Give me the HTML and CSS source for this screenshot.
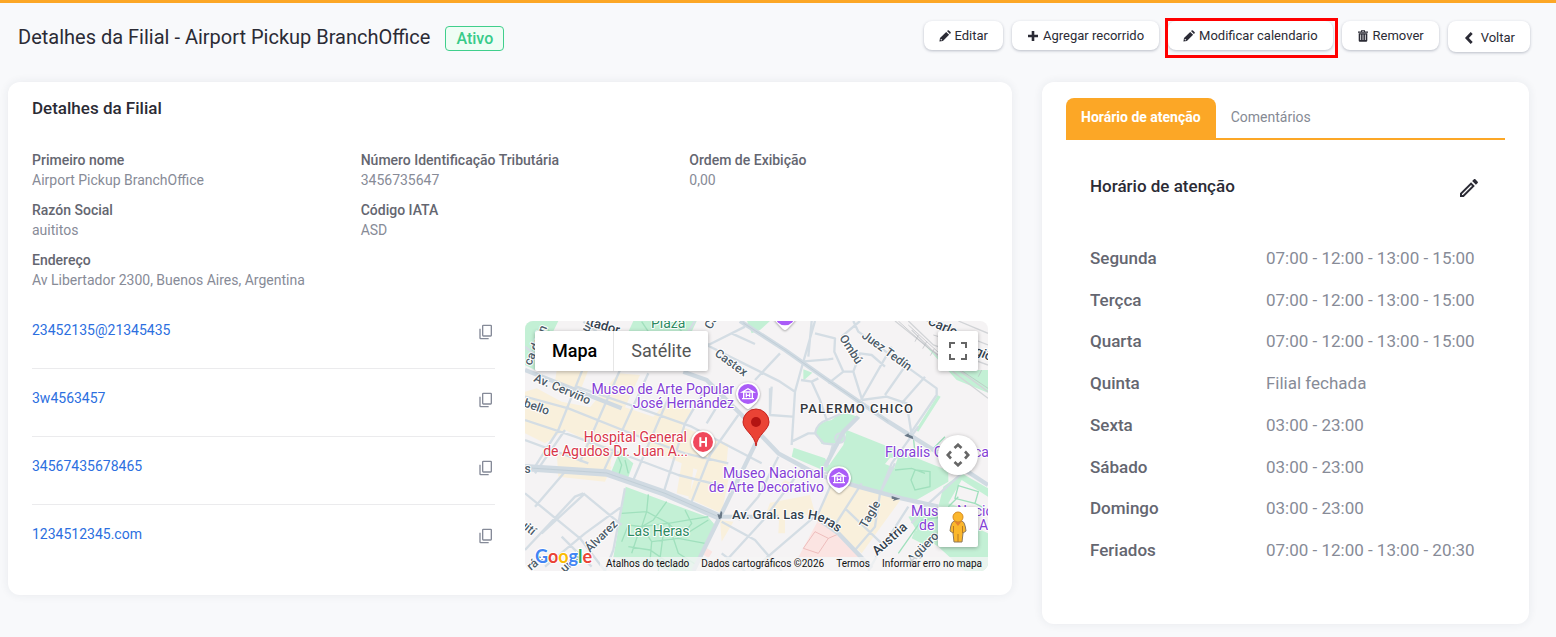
FILE: index.html
```html
<!DOCTYPE html>
<html lang="pt">
<head>
<meta charset="utf-8">
<meta name="viewport" content="width=device-width, initial-scale=1">
<title>Detalhes da Filial</title>
<link rel="stylesheet" href="styles.css">
</head>
<body>
<header class="page-header">
  <h1 class="page-title">Detalhes da Filial - Airport Pickup BranchOffice</h1>
  <span class="badge">Ativo</span>
  <div class="actions">
    <button class="btn" type="button"><svg class="btn-icon" viewBox="0 0 12 12"><path fill="currentColor" fill-rule="evenodd" d="M.4 11.6 1 8.100 7.200 1.900 10.100 4.800 3.900 11ZM8 1.100 8.700.4Q9.300-.1 9.900.5L11.500 2.100Q12.100 2.700 11.600 3.300L10.900 4ZM1.900 8.700 1.500 9.500 2.500 10.500 3.400 10.100Z"/></svg>Editar</button>
    <button class="btn" type="button"><svg class="btn-icon" viewBox="0 0 12 12"><path fill="currentColor" d="M4.700 1h2.600v3.700H11v2.600H7.300V11H4.700V7.300H1V4.700h3.700z"/></svg>Agregar recorrido</button>
    <button class="btn btn-marked" type="button"><svg class="btn-icon" viewBox="0 0 12 12"><path fill="currentColor" fill-rule="evenodd" d="M.4 11.600 1 8.100 7.200 1.900 10.100 4.800 3.900 11ZM8 1.100 8.700.4Q9.300-.1 9.900.5L11.500 2.100Q12.100 2.700 11.600 3.300L10.900 4ZM1.900 8.700 1.500 9.500 2.500 10.500 3.400 10.100Z"/></svg>Modificar calendario</button>
    <button class="btn" type="button"><svg class="btn-icon" viewBox="0 0 12 12"><path fill="currentColor" fill-rule="evenodd" d="M4 1.500V.2h4v1.300h3v1.300H1V1.500ZM5 1.100v.4h2v-.4ZM1.700 3.300h8.600V10.500q0 1.300-1.200 1.300H2.900q-1.200 0-1.200-1.300ZM3.300 4.400v5.700h.8V4.400ZM5.600 4.400v5.700h.8V4.400ZM7.900 4.400v5.700h.8V4.400Z"/></svg>Remover</button>
    <a class="btn btn-back" href="#"><svg class="btn-icon" viewBox="0 0 12 12"><path fill="none" stroke="currentColor" stroke-width="2.800" d="M8.700 1 3.900 6l4.800 5"/></svg>Voltar</a>
  </div>
</header>

<main class="content">
  <section class="card details">
    <h2 class="card-title">Detalhes da Filial</h2>
    <dl class="fields">
      <div class="field"><dt>Primeiro nome</dt><dd>Airport Pickup BranchOffice</dd></div>
      <div class="field"><dt>Número Identificação Tributária</dt><dd>3456735647</dd></div>
      <div class="field"><dt>Ordem de Exibição</dt><dd>0,00</dd></div>
      <div class="field"><dt>Razón Social</dt><dd>auititos</dd></div>
      <div class="field"><dt>Código IATA</dt><dd>ASD</dd></div>
      <div class="field field-wide"><dt>Endereço</dt><dd>Av Libertador 2300, Buenos Aires, Argentina</dd></div>
    </dl>
    <div class="contact-row">
      <ul class="contacts">
        <li><a href="#">23452135@21345435</a><button class="copy" type="button" aria-label="Copiar"><svg viewBox="0 0 24 24"><path fill="currentColor" d="M16 21H4V7H2v14a2 2 0 0 0 2 2h12zM19 1H8a2 2 0 0 0-2 2v14a2 2 0 0 0 2 2h11a2 2 0 0 0 2-2V3a2 2 0 0 0-2-2m0 16H8V3h11z"/></svg></button></li>
        <li><a href="#">3w4563457</a><button class="copy" type="button" aria-label="Copiar"><svg viewBox="0 0 24 24"><path fill="currentColor" d="M16 21H4V7H2v14a2 2 0 0 0 2 2h12zM19 1H8a2 2 0 0 0-2 2v14a2 2 0 0 0 2 2h11a2 2 0 0 0 2-2V3a2 2 0 0 0-2-2m0 16H8V3h11z"/></svg></button></li>
        <li><a href="#">34567435678465</a><button class="copy" type="button" aria-label="Copiar"><svg viewBox="0 0 24 24"><path fill="currentColor" d="M16 21H4V7H2v14a2 2 0 0 0 2 2h12zM19 1H8a2 2 0 0 0-2 2v14a2 2 0 0 0 2 2h11a2 2 0 0 0 2-2V3a2 2 0 0 0-2-2m0 16H8V3h11z"/></svg></button></li>
        <li><a href="#">1234512345.com</a><button class="copy" type="button" aria-label="Copiar"><svg viewBox="0 0 24 24"><path fill="currentColor" d="M16 21H4V7H2v14a2 2 0 0 0 2 2h12zM19 1H8a2 2 0 0 0-2 2v14a2 2 0 0 0 2 2h11a2 2 0 0 0 2-2V3a2 2 0 0 0-2-2m0 16H8V3h11z"/></svg></button></li>
      </ul>
      <div class="map">
        <svg class="map-art" viewBox="0 0 463 250" preserveAspectRatio="xMidYMid slice" role="img" aria-label="Mapa de Palermo Chico">
          <defs>
            <path id="las-heras-avenue" d="M207 198H280C292 198 298 202 305 206L325 220"/>
          </defs>
          <svg viewBox="0 3 1389 750" width="463" height="250">
            <rect y="3" width="1389" height="750" fill="#f5f3f4"/>
            <g class="blocks">
              <path d="M95 150H190L158 232 88 200ZM0 215 35 205 110 245 195 262 280 160 345 165 300 262 385 290 420 250 500 270 470 320 610 372 600 480 505 445 495 530 455 520 470 430 380 390 340 345 260 330 215 375 120 330 60 370 0 340ZM95 395 260 440 240 485 100 470ZM185 360 265 385 255 440 170 420ZM520 440 610 480 590 580 490 535ZM725 575 735 548 855 525 870 580 780 600 780 640 760 640 762 602ZM912 500 980 490 1130 535 1010 700 880 590ZM585 600 625 605 590 665ZM780 480 810 495 795 520 755 505Z"/>
            </g>
            <path fill="#fbe4e2" d="M880 600 945 640 1010 712 820 712ZM540 680 562 695 550 715 530 700ZM575 712 610 725 600 753 560 745Z"/>
            <g class="parks">
              <path d="M0 3H100L72 60 30 150 0 135ZM325 3H515L500 35 310 35ZM666 3H735L705 30 680 40ZM835 148 862 158 835 182ZM302 500 550 592 570 615 510 753 440 753 265 712ZM283 395 325 430 305 485 255 465ZM806 383 900 415 912 436 955 375 965 330 1270 452 1270 485 1165 545 985 490 800 410ZM870 335Q880 305 920 300L950 275 1005 292 968 330 945 370 890 372ZM1190 65 1300 150 1389 150 1389 218 1295 180ZM1238 226 1247 230 1180 335 1172 330ZM1150 590 1240 570 1389 640V753H1320L1240 680 1180 640ZM1255 500 1310 460 1389 505V560H1240ZM1170 630 1240 660 1210 680 1160 655Z"/>
            </g>
            <path fill="#f5f3f4" d="M1080 432 1095 413 1118 415 1108 443ZM1310 480 1389 530 1389 590 1270 550Z"/>
            <g fill="none" stroke="#a0e0bd" stroke-width="4">
              <path d="M370 523 365 575 350 620 310 615 290 665M425 545 385 600 350 620 380 665 375 725M290 580 365 575 430 610 550 590M430 610 470 650 550 600M350 620 430 610 460 700 515 735M380 665 460 655 540 670M345 625 320 700M415 640 400 753M470 650 500 610 480 570M310 680 375 690 455 745M1165 350 1170 400 1215 395 1260 350M1110 450 1160 445 1200 460M1170 450 1215 455V500L1170 510 1158 480ZM1300 497 1360 515 1350 550 1290 535ZM1270 560 1300 530M1350 550 1389 570M1120 700 1190 600 1260 590M275 400 290 435 280 470M300 420 310 460M40 60 10 110M60 20 90 50M350 5 370 35M440 3 470 34"/>
            </g>
            <g class="minor">
              <path d="M0 80 90 150M175 5 215 35M180 130 100 330 30 440M285 150 165 425M370 160 235 455M430 235 325 480M510 3 490 35M545 200 480 310 415 520M640 285 555 405 500 545M550 75 660 20M545 75 765 185 810 215M620 40 690 72M690 180 765 100M740 200 735 285 802 290M735 205 735 285M870 3 828 150M860 3 850 110M828 125 910 118 925 116M870 40 930 55 928 95 955 155 985 155M955 155 910 190M950 50 1005 3M985 155 1005 100 1040 105 1080 140M985 155 1010 235M1100 80 1008 240M1150 125 1080 225M1200 170 1130 250M985 3 1000 35 1235 205 1235 225 1160 335M1010 240 1085 230 1145 250 1160 345M828 150 810 215 800 375M828 180 860 185 885 240 905 300M860 185 880 175M800 365 850 340 870 340Q875 310 905 300L1010 255M870 340 895 370 940 375M0 300 150 350 300 405 460 465 600 500M0 230 130 265 330 345 480 400 610 430M155 200 330 260 500 320 710 430M0 360 190 430M120 330 30 460M30 560 120 455M0 520 165 655 240 753M0 690 150 530 175 520M50 640 180 520M175 520 290 615M60 740 180 640 290 560M110 650 200 740M300 505 265 690 240 753M600 220 545 310M760 410 700 530 640 600M835 440 715 600 575 753M920 490 880 580 740 700 680 753M1010 490 930 615M960 565 1080 680M1065 520 1050 620 990 690M1110 430 1065 520M1180 320 1100 430 1065 520M1310 460 1200 560 1160 610M1150 560 1060 700 1030 753M590 605 690 660 770 753M590 700 660 753M500 35 550 75"/>
              <path d="M905 440 925 370M875 465 920 455"/>
            </g>
            <g fill="none" stroke="#e7a9a9" stroke-width="2">
              <path d="M870 635 910 655 945 640 985 690M870 635 835 685 880 700 910 655"/>
            </g>
            <g class="minor"><circle cx="945" cy="354" r="14" fill="#c3f0d5"/></g>
            <g class="major">
              <path d="M645 3 780 90 900 175 1090 305 1290 430 1389 495M475 155 545 180 650 285 760 400 880 465 1000 500 1130 535 1240 560M0 150 290 265M692 370 585 590 505 753M870 590 940 640 1040 745M900 440 955 335 1000 290"/>
            </g>
            <path fill="none" stroke="#d0dae2" stroke-width="22" d="M0 443 245 459 420 520 585 592"/>
            <path fill="none" stroke="#d0dae2" stroke-width="12" d="M585 590 760 590"/>
            <path fill="none" stroke="#b9c8d2" stroke-width="2" d="M0 443 245 459 420 520 580 590M655 9 780 90 900 175 1090 305"/>
            <g fill="none" stroke="#d2d4d7" stroke-width="4">
              <path d="M1110 3 1200 75 1389 215M1150 3 1225 75 1389 135M1205 3 1389 75M1300 3 1389 40M1160 30 1290 160 1389 235"/>
            </g>
            <g fill="none" stroke="#b8bbc0" stroke-width="2">
              <path d="M1120 3 1210 85 1389 205M1150 15 1260 115M1225 45 1389 95M1180 45 1170 65M1205 65 1193 86M1228 86 1216 107M1280 20 1270 40M1320 35 1310 55M1350 130 1340 150M1370 150 1360 170"/>
            </g>
            <path fill="#697887" d="M1165 358 1138 347 1150 340 1152 344 1163 349ZM1100 528 1126 536 1103 543 1108 538 1100 536ZM582 598 577 582 584 584 588 572 592 578 590 594Z"/>
            <g class="pins">
              <path fill="#fff" d="M669 187A35 35 0 0 1 695 246L675 265Q669 270 663 265L643 246A35 35 0 0 1 669 187ZM534 331A35 35 0 0 1 560 390L540 409Q534 414 528 409L508 390A35 35 0 0 1 534 331ZM942 439A35 35 0 0 1 968 498L948 517Q942 522 936 517L916 498A35 35 0 0 1 942 439ZM780-52A35 35 0 0 1 806 7L786 28Q780 33 774 28L754 7A35 35 0 0 1 780-52Z"/>
            </g>
            <g fill="#aa5cf7"><circle cx="669" cy="222" r="30"/><circle cx="942" cy="474" r="30"/><circle cx="780" cy="-14" r="30"/></g>
            <circle cx="534" cy="366" r="30" fill="#f0485c"/>
            <path fill="none" stroke="#fff" stroke-width="6" d="M526 352V380M543 352V380M526 366H543"/>
            <g fill="none" stroke="#fff" stroke-width="4">
              <path d="M652 216 669 206 686 216ZM656 217V236M682 217V236M664 220V232M674 220V232M664 226H674M651 236H687M925 468 942 458 959 468ZM929 469V488M955 469V488M937 472V484M947 472V484M937 478H947M924 488H960"/>
            </g>
          </svg>
          <g class="labels">
            <g class="poi" text-anchor="end"><text x="209" y="73">Museo de Arte Popular</text><text x="209" y="87">José Hernández</text><text x="299" y="157">Museo Nacional</text><text x="299" y="171">de Arte Decorativo</text></g>
            <g class="poi"><text x="360" y="136">Floralis Genérica</text><text x="386" y="195">Museo Nacional</text><text x="394" y="209">de Bellas Artes</text></g>
            <g class="hospital" text-anchor="end"><text x="162" y="121">Hospital General</text><text x="163" y="135">de Agudos Dr. Juan A...</text></g>
            <g class="park"><text x="102" y="215">Las Heras</text><text x="126" y="7">Plaza</text></g>
            <text class="district" x="275" y="92">PALERMO CHICO</text>
            <text class="avenue"><textPath href="#las-heras-avenue">Av. Gral. Las Heras</textPath></text>
            <g class="street">
              <text transform="translate(8 60) rotate(23)">Av. Cerviño</text>
              <text transform="translate(-8 83) rotate(20)">abello</text>
              <text transform="translate(189 34) rotate(36)">Castex</text>
              <text transform="translate(314 17) rotate(57)">Ombú</text>
              <text transform="translate(336 16) rotate(36)">Juez Tedín</text>
              <text transform="translate(341 208) rotate(-60)">Tagle</text>
              <text transform="translate(387 243) rotate(-45)">Agüero</text>
              <text transform="translate(65 232) rotate(-45)">Álvarez</text>
              <text transform="translate(40 252) rotate(-45)">ulián</text>
              <text transform="translate(6 250) rotate(-40)">rác</text>
              <text transform="translate(-12 199) rotate(40)">Cuití</text>
              <text transform="translate(6 45) rotate(-67)">ca de In</text>
              <text transform="translate(186 9) rotate(-60)">Ca</text>
              <text transform="translate(63 12) rotate(-60)">ur</text>
              <text x="-7" y="152">as</text>
            </g>
            <g class="avenue">
              <text transform="translate(352 235) rotate(-42)">Austria</text>
              <text transform="translate(64 5) rotate(16)">tador</text>
              <text transform="translate(402 3) rotate(24)">Carlo</text>
              <text transform="translate(449 33) rotate(24)">gio</text>
            </g>
            <g class="wordmark"><text x="10" y="242"><tspan fill="#4285f4">G</tspan><tspan fill="#ea4335">o</tspan><tspan fill="#fbbc04">o</tspan><tspan fill="#4285f4">g</tspan><tspan fill="#34a853">l</tspan><tspan fill="#ea4335">e</tspan></text></g>
          </g>
          <path fill="#ea4335" stroke="#c5221f" d="M231 125C230 114 218 109 218 101a13 13 0 0 1 26 0C244 109 232 114 231 125Z"/>
          <circle cx="231" cy="101" r="5" fill="#b31412"/>
        </svg>
        <div class="map-types"><button class="map-type map-type-on" type="button">Mapa</button><button class="map-type" type="button">Satélite</button></div>
        <button class="map-control fullscreen" type="button" aria-label="Tela cheia"><svg viewBox="0 0 18 18"><path fill="#666" d="M0 0v6h2V2h4V0H0zm16 0h-4v2h4v4h2V0h-2zm0 16h-4v2h6v-6h-2v4zM2 12H0v6h6v-2H2v-4z"/></svg></button>
        <button class="map-control pan" type="button" aria-label="Mover mapa"><svg viewBox="0 0 24 24"><path fill="none" stroke="#666" stroke-width="2.600" d="M8.500 5 12 1.700 15.500 5M8.500 19l3.500 3.300 3.500-3.300M5 8.500 1.700 12 5 15.500M19 8.500l3.300 3.500-3.300 3.500"/></svg></button>
        <button class="map-control pegman" type="button" aria-label="Street View"><svg viewBox="0 0 18 32"><path fill="#fbb72c" stroke="#8b7960" d="M5 10Q2 11 1 20l3 2 1 9h8l1-9 3-2Q16 11 13 10Z"/><path fill="#e58231" d="M5 10h8l-4 5Z"/><path fill="none" stroke="#b77a25" d="M9 23v8M4.500 15v7M13.500 15v7"/><circle cx="9" cy="6" r="5" fill="#fbb72c" stroke="#d68b22"/></svg></button>
        <div class="map-legal"><button type="button">Atalhos do teclado</button><span>Dados cartográficos ©2026</span><a href="#">Termos</a><a href="#">Informar erro no mapa</a></div>
      </div>
    </div>
  </section>

  <section class="card hours">
    <div class="tabs" role="tablist">
      <button class="tab tab-on" type="button" role="tab" aria-selected="true">Horário de atenção</button>
      <button class="tab" type="button" role="tab" aria-selected="false">Comentários</button>
    </div>
    <div class="hours-panel">
      <div class="hours-head">
        <h2 class="hours-title">Horário de atenção</h2>
        <button class="edit" type="button" aria-label="Editar horário"><svg viewBox="0 0 24 24"><path fill="currentColor" d="m14.060 9 .94.940L5.920 19H5v-.920zm3.600-6c-.250 0-.510.100-.700.290l-1.830 1.830 3.750 3.750 1.830-1.830c.390-.390.390-1.040 0-1.410l-2.340-2.340c-.200-.200-.450-.290-.710-.290m-3.600 3.190L3 17.250V21h3.750L17.810 9.940z"/></svg></button>
      </div>
      <table class="schedule">
        <tbody>
          <tr><th scope="row">Segunda</th><td>07:00 - 12:00 - 13:00 - 15:00</td></tr>
          <tr><th scope="row">Terçca</th><td>07:00 - 12:00 - 13:00 - 15:00</td></tr>
          <tr><th scope="row">Quarta</th><td>07:00 - 12:00 - 13:00 - 15:00</td></tr>
          <tr><th scope="row">Quinta</th><td>Filial fechada</td></tr>
          <tr><th scope="row">Sexta</th><td>03:00 - 23:00</td></tr>
          <tr><th scope="row">Sábado</th><td>03:00 - 23:00</td></tr>
          <tr><th scope="row">Domingo</th><td>03:00 - 23:00</td></tr>
          <tr><th scope="row">Feriados</th><td>07:00 - 12:00 - 13:00 - 20:30</td></tr>
        </tbody>
      </table>
    </div>
  </section>
</main>
</body>
</html>
```
FILE: styles.css
```css
* { box-sizing: border-box; }

body {
  margin: 0;
  border-top: 3px solid #fca726;
  background: #f8f9fb;
  color: #2b2b35;
  font: 14px/20px Roboto, sans-serif;
}

h1, h2, dl, dd, ul { margin: 0; padding: 0; }
button { font: inherit; color: inherit; border: 0; padding: 0; background: none; cursor: pointer; }
a { text-decoration: none; color: inherit; }
svg { display: block; }

.page-header {
  display: flex;
  align-items: flex-start;
  padding: 18px 26px 0 18px;
  min-height: 79px;
}
.page-title { font-size: 20px; line-height: 32px; font-weight: 400; }
.badge {
  margin: 5px 0 0 15px;
  padding: 0 10px;
  border: 1px solid #40cf8c;
  border-radius: 4px;
  background: #effdf5;
  color: #38cb89;
  font-size: 16px;
  line-height: 23px;
  font-weight: 500;
}
.actions { display: flex; align-items: flex-start; gap: 9px; margin-left: auto; }
.btn {
  position: relative;
  display: flex;
  align-items: center;
  gap: 4px;
  padding: 5px 15px 4px;
  border-radius: 8px;
  background: #fff;
  box-shadow: 0 1px 3px rgba(40, 50, 80, .3);
  font-size: 13px;
  line-height: 20px;
}
.btn-icon { width: 12px; height: 12px; }
.btn-back { gap: 6px; padding: 7px 15px 4px; }
.btn-marked::after {
  content: "";
  position: absolute;
  inset: -3px -5px -8px -3px;
  border: 3px solid #f00;
}

.content {
  display: grid;
  grid-template-columns: repeat(12, minmax(0, 1fr));
  align-items: start;
  gap: 30px;
  padding: 0 27px 13px 8px;
}
.card { border-radius: 12px; background: #fff; box-shadow: 0 0 10px rgba(40, 50, 80, .08); }
.details { grid-column: span 8; padding: 16px 24px 24px; }
.card-title { font-size: 17px; line-height: 20px; font-weight: 500; }
.fields {
  display: grid;
  grid-template-columns: repeat(3, minmax(0, 1fr));
  gap: 10px 30px;
  margin-top: 32px;
}
.field-wide { grid-column: 1 / -1; }
.field dt { color: #646670; font-weight: 500; }
.field dd { color: #878b97; }

.contact-row {
  display: grid;
  grid-template-columns: repeat(2, minmax(0, 1fr));
  align-items: end;
  gap: 30px;
  margin-top: 30px;
}
.contacts { list-style: none; padding-bottom: 27px; color: #2c6fe0; }
.contacts li {
  display: flex;
  justify-content: space-between;
  align-items: flex-end;
  padding: 19px 1px 28px 0;
  border-bottom: 1px solid #ebebed;
}
.contacts li:first-child { padding-top: 0; }
.contacts li:last-child { padding-bottom: 0; border: 0; }
.copy { width: 16px; height: 16px; color: #858a98; }

.map { position: relative; height: 250px; border-radius: 8px; overflow: hidden; }
.map-art { width: 100%; height: 100%; }
.blocks { fill: #f9f0dc; }
.parks { fill: #c3f0d5; }
.minor { fill: none; stroke: #d4dde4; stroke-width: 7; stroke-linejoin: round; }
.major { fill: none; stroke: #d0dae2; stroke-width: 13; stroke-linejoin: round; }
.pins { filter: drop-shadow(0 2px 3px rgba(0, 0, 0, .4)); }
.labels text { paint-order: stroke; stroke: #fff; stroke-width: 2px; stroke-linejoin: round; }
.poi { fill: #8440d6; font-size: 14px; }
.hospital { fill: #d83549; font-size: 14px; }
.park { fill: #2b8a60; font-size: 14px; }
.district { fill: #33373c; font-size: 13px; font-weight: 500; letter-spacing: 1px; }
.avenue { fill: #33414e; font-size: 13px; font-weight: 500; }
.street { fill: #4c5b68; font-size: 12px; font-weight: 500; }
.wordmark { font: 700 18px Lato, sans-serif; }
.map-types {
  position: absolute;
  top: 10px;
  left: 10px;
  display: flex;
  border-radius: 2px;
  background: #fff;
  box-shadow: 0 1px 4px rgba(0, 0, 0, .3);
}
.map-type { padding: 0 17px; color: #565656; font-size: 18px; line-height: 40px; }
.map-type-on { padding-right: 16px; color: #000; font-weight: 500; border-right: 1px solid #e6e6e6; }
.map-control {
  position: absolute;
  right: 10px;
  display: grid;
  place-items: center;
  width: 40px;
  height: 40px;
  border-radius: 2px;
  background: #fff;
  box-shadow: 0 1px 4px rgba(0, 0, 0, .3);
}
.fullscreen { top: 10px; }
.fullscreen svg { width: 18px; height: 18px; }
.pan { top: 114px; border-radius: 50%; }
.pan svg { width: 24px; height: 24px; }
.pegman { bottom: 24px; }
.pegman svg { width: 18px; height: 32px; }
.map-legal {
  position: absolute;
  right: 0;
  bottom: 0;
  display: flex;
  background: rgba(245, 245, 245, .75);
  color: #111;
  font-size: 10px;
  line-height: 14px;
  white-space: nowrap;
}
.map-legal > * { padding: 0 6px; }

.hours { grid-column: span 4; padding: 16px 24px 29px; }
.tabs { display: flex; border-bottom: 2px solid #fca726; }
.tab { padding: 9px 15px 11px; color: #858a94; line-height: 20px; }
.tab-on { border-radius: 8px 8px 0 0; background: #fca726; color: #fff; font-weight: 700; }
.hours-panel { padding: 36px 24px 24px; }
.hours-head { display: flex; justify-content: space-between; align-items: flex-start; }
.hours-title { font-size: 17px; line-height: 20px; font-weight: 500; }
.edit { display: flex; width: 24px; height: 26px; }
.edit svg { width: 24px; height: 24px; }
.schedule {
  width: 100%;
  height: 334px;
  margin-top: 35px;
  border-collapse: collapse;
  font-size: 17px;
  line-height: 24px;
}
.schedule th, .schedule td { padding: 0; text-align: left; white-space: nowrap; }
.schedule th { width: 45%; color: #646670; font-weight: 500; }
.schedule td { color: #878b97; }
```
